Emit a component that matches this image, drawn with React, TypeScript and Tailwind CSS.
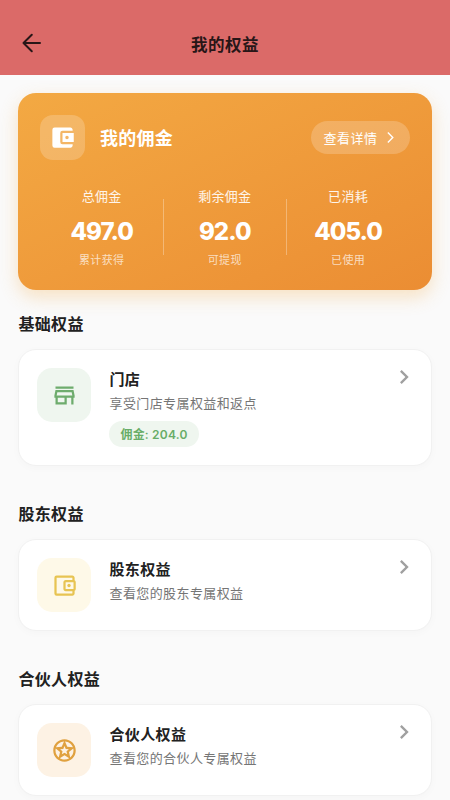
import type { ReactNode } from "react";
import {
  MdAccountBalanceWallet,
  MdArrowForwardIos,
  MdChevronRight,
  MdOutlineAccountBalanceWallet,
  MdOutlineStars,
  MdOutlineStore,
} from "react-icons/md";

const stats = [
  { label: "总佣金", value: "497.0", note: "累计获得" },
  { label: "剩余佣金", value: "92.0", note: "可提现" },
  { label: "已消耗", value: "405.0", note: "已使用" },
];

interface BenefitSectionProps {
  heading: string;
  title: string;
  desc: string;
  icon: ReactNode;
  iconClass: string;
  badge?: string;
}

function Header() {
  return (
    <header className="grid h-[74.5px] shrink-0 grid-cols-[72px_1fr_72px] items-start bg-[#db6a68] pt-[30px] text-[#281617]">
      <button className="ml-[21px] mt-[2px] w-fit">
        <svg width="21" height="22" viewBox="0 0 21 22" fill="none" stroke="currentColor" strokeWidth="2" strokeLinecap="round" strokeLinejoin="round">
          <path d="M19 11H2.5M10.8 2.8L2.5 11l8.3 8.2" />
        </svg>
      </button>
      <h1 className="text-center text-[16.5px] leading-7 font-bold tracking-[0.5px]">我的权益</h1>
    </header>
  );
}

function CommissionCard() {
  return (
    <section className="h-[196.5px] rounded-[18px] bg-linear-to-br from-[#f3a943] to-[#eb8d33] px-[22.4px] pt-[22px] text-white shadow-[0_7px_18px_rgba(243,170,67,0.3)]">
      <div className="flex items-center">
        <div className="flex size-[45px] items-center justify-center rounded-[13px] bg-white/20">
          <MdAccountBalanceWallet size={27} />
        </div>
        <h2 className="-mt-[2px] ml-[14.5px] text-[18px] leading-6 font-bold tracking-[0.3px]">我的佣金</h2>
        <button className="ml-auto flex h-[33px] w-[99px] items-center justify-center gap-[6px] rounded-full bg-white/20 text-[13px] tracking-[0.5px]">
          查看详情
          <MdArrowForwardIos size={13} />
        </button>
      </div>
      <div className="mt-[22px] grid grid-cols-3 text-center">
        {stats.map((item, i) => (
          <div key={item.label} className="flex items-center">
            <div className="flex-1">
              <div className="pt-1 text-[13px] leading-[20px] tracking-[0.3px] text-white/90">{item.label}</div>
              <div className="mt-[12px] font-['Inter'] text-[24px] leading-[28px] font-extrabold tracking-[-1px]">{item.value}</div>
              <div className="mt-[4px] text-[11px] leading-[18px] tracking-[0.3px] text-white/70">{item.note}</div>
            </div>
            {i < stats.length - 1 && <div className="-mr-[0.5px] mt-[3px] h-14 w-px bg-white/30" />}
          </div>
        ))}
      </div>
    </section>
  );
}

function BenefitSection({ heading, title, desc, icon, iconClass, badge }: BenefitSectionProps) {
  return (
    <section>
      <h2 className="pl-[0.5px] text-[16px] leading-[24px] font-bold tracking-[0.3px] text-[#212121]">{heading}</h2>
      <div
        className={`mt-[14px] flex items-start rounded-[18px] border border-[#f1f1f1] bg-white px-[18px] pt-[18px] shadow-[0_2px_8px_rgba(0,0,0,0.025)] ${
          badge ? "h-[117px]" : "h-[92px]"
        }`}
      >
        <div className={`flex size-[54px] items-center justify-center rounded-[15px] ${iconClass}`}>{icon}</div>
        <div className="ml-[18px] flex-1">
          <h3 className="pl-[0.5px] text-[15px] leading-[22px] font-bold tracking-[0.35px] text-[#212121]">{title}</h3>
          <p className="mt-[2px] pl-[0.5px] text-[13px] leading-[22px] tracking-[0.4px] text-[#757575]">{desc}</p>
          {badge && (
            <span className="mt-[7px] flex h-[26px] w-[90px] items-center justify-center rounded-full bg-[#eff6ef] pt-[2px] font-['Inter','Noto_Sans_CJK_SC',sans-serif] text-[12px] font-semibold tracking-[0.2px] text-[#68ad67]">
              {badge}
            </span>
          )}
        </div>
        <MdChevronRight size={28} className="-mt-[5px] -mr-[5px] text-[#a0a0a0]" />
      </div>
    </section>
  );
}

export default function App() {
  return (
    <div
      lang="zh-CN"
      className="flex h-[800px] w-[450px] flex-col overflow-hidden bg-[#fafafa] font-['Noto_Sans_CJK_SC',sans-serif]"
    >
      <Header />
      <main className="px-[18px] pt-[18.5px]">
        <CommissionCard />
        <div className="mt-[21.5px] flex flex-col gap-[35px]">
          <BenefitSection
            heading="基础权益"
            title="门店"
            desc="享受门店专属权益和返点"
            icon={<MdOutlineStore size={27} />}
            iconClass="bg-[#eff6ef] text-[#6eac6d]"
            badge="佣金: 204.0"
          />
          <BenefitSection
            heading="股东权益"
            title="股东权益"
            desc="查看您的股东专属权益"
            icon={<MdOutlineAccountBalanceWallet size={27} />}
            iconClass="bg-[#fef9e8] text-[#e7c452]"
          />
          <BenefitSection
            heading="合伙人权益"
            title="合伙人权益"
            desc="查看您的合伙人专属权益"
            icon={<MdOutlineStars size={27} />}
            iconClass="bg-[#fdf2e4] text-[#e0a13f]"
          />
        </div>
      </main>
    </div>
  );
}
